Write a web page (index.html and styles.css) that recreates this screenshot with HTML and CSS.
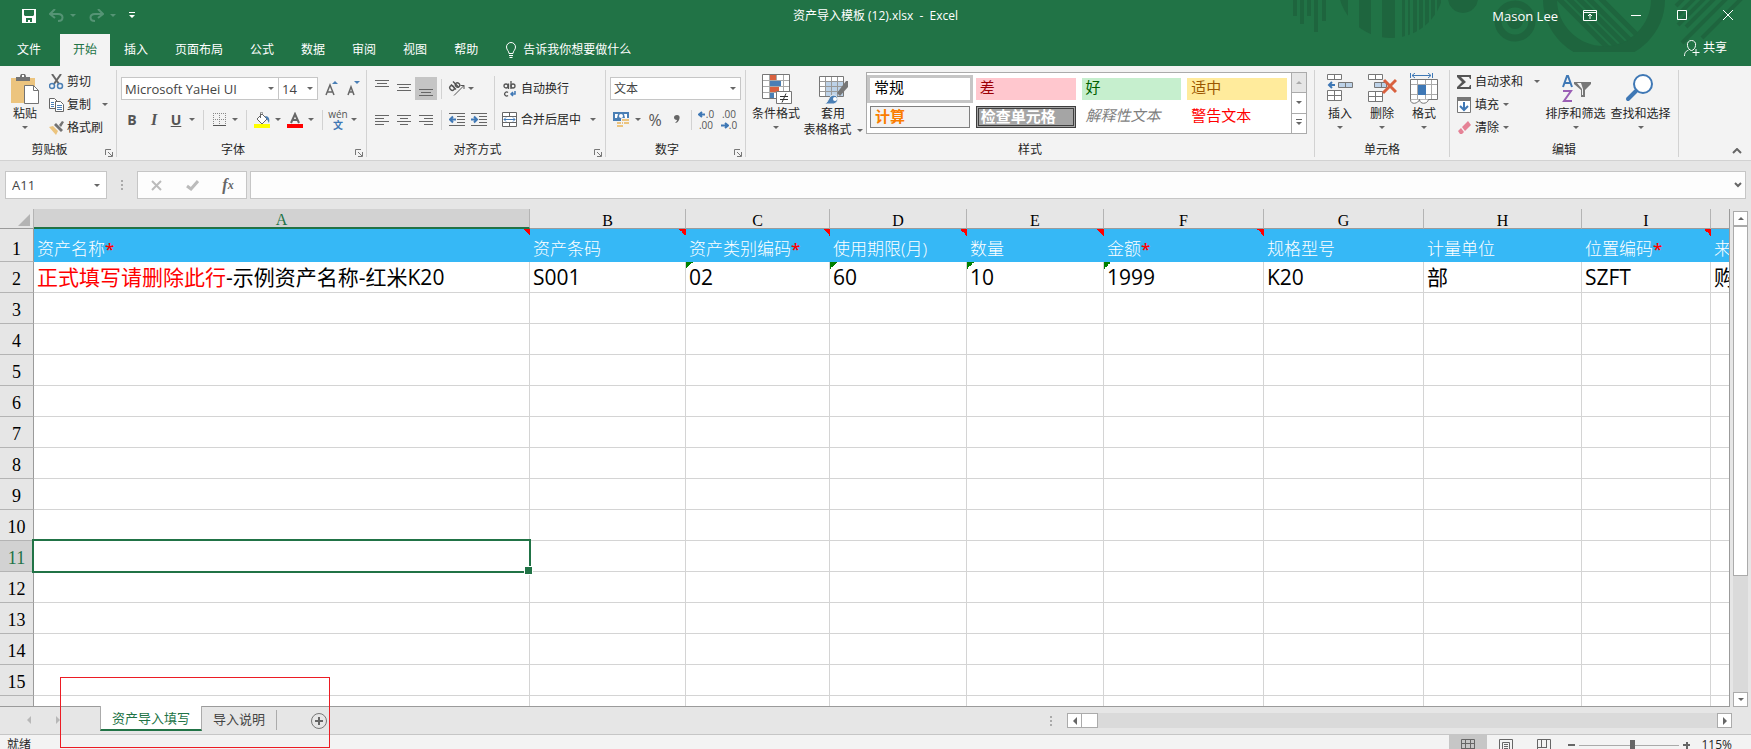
FILE: index.html
```html
<!DOCTYPE html>
<html lang="zh-CN">
<head>
<meta charset="UTF-8">
<meta name="viewport" content="width=device-width, initial-scale=1.0">
<title>资产导入模板 (12).xlsx - Excel</title>
<link rel="stylesheet" href="styles.css">
</head>
<body>
<header class="top">
    <svg class="deco" width="501" height="66" viewBox="0 0 501 66" aria-hidden="true">
        <defs>
            <clipPath id="disc"><circle cx="141" cy="-15" r="53"/></clipPath>
            <clipPath id="ringBox"><rect x="280" y="0" width="150" height="52"/></clipPath>
            <clipPath id="ringHole"><circle cx="354" cy="-1" r="48"/></clipPath>
        </defs>
        <path fill="#1e653e" d="M43 0h4v16h-4zM50 0h4v24h-4zM57 0h4v16h-4zM64 0h4v32h-4zM72 0h4v21h-4z"/>
        <path fill="#1e653e" clip-path="url(#disc)" d="M88 0h10v40h-10zM109 0h12v40h-12zM132 0h13v40h-13zM152 0h3v40h-3zM158 0h2v40h-2zM163 0h4v40h-4zM169 0h4v40h-4zM175 0h4v40h-4zM181 0h4v40h-4zM187 0h4v40h-4z"/>
        <circle cx="213" cy="-2" r="15" fill="#1e653e"/>
        <circle cx="265" cy="21" r="17" fill="none" stroke="#1e653e" stroke-width="7"/>
        <circle cx="265" cy="21" r="8" fill="#1e653e"/>
        <g clip-path="url(#ringBox)" stroke="#1e653e" fill="none">
            <circle cx="354" cy="-1" r="54" stroke-width="14"/>
            <path clip-path="url(#ringHole)" stroke-width="5" d="M290 -20l80 80M300 -20l80 80M310 -20l80 80M320 -20l80 80M332 -20l80 80"/>
        </g>
        <path stroke="#1e653e" stroke-width="4" d="M426 6l8-8M428 15l18-18M428 25l28-28M436 27l30-30M432 43l46-46M452 38l42-42"/>
    </svg>
    <div class="titlebar">
        <div class="quick">
            <button class="plain" aria-label="保存"><svg width="14" height="14" viewBox="0 0 14 14"><path fill="#fff" fill-rule="evenodd" d="M0 0h14v14H0zM2 1v5l1 1h8l1-1V1zM4 9v4h2v-2h2v2h2V9z"/></svg></button>
            <button class="plain dim" aria-label="撤消"><svg width="15" height="13" viewBox="0 0 15 13"><path fill="none" stroke="#559475" stroke-width="2" d="M6 0L1 5l5 4M1 5h8c6 0 6 7 0 7"/></svg><span class="caret"></span></button>
            <button class="plain dim" aria-label="恢复"><svg width="15" height="13" viewBox="0 0 15 13"><path fill="none" stroke="#559475" stroke-width="2" d="M9 0l5 5-5 4M14 5H6c-6 0-6 7 0 7"/></svg><span class="caret"></span></button>
            <button class="plain" aria-label="自定义快速访问工具栏"><svg width="6" height="7" viewBox="0 0 6 7"><path fill="#fff" d="M0 0h6v1H0zM0 3h6L3 6z"/></svg></button>
        </div>
        <div class="doc-title">资产导入模板 (12).xlsx&nbsp; -&nbsp; Excel</div>
        <div class="window-tools">
            <span class="user">Mason Lee</span>
            <button class="plain win" aria-label="功能区显示选项"><svg width="14" height="11" viewBox="0 0 14 11"><path fill="none" stroke="#fff" d="M.5 .5h13v10H.5zM.5 2.500h13M7 9V4M5 6l2-2 2 2"/></svg></button>
            <button class="plain win" aria-label="最小化"><svg width="11" height="11" viewBox="0 0 11 11"><path stroke="#fff" d="M0 5.500h10"/></svg></button>
            <button class="plain win" aria-label="最大化"><svg width="11" height="11" viewBox="0 0 11 11"><path fill="none" stroke="#fff" d="M.5 .5h9v9H.5z"/></svg></button>
            <button class="plain win" aria-label="关闭"><svg width="11" height="11" viewBox="0 0 11 11"><path stroke="#fff" d="M0 0l10 10M10 0L0 10"/></svg></button>
        </div>
    </div>
    <nav class="tabs">
        <button class="tab file">文件</button>
        <button class="tab active">开始</button>
        <button class="tab">插入</button>
        <button class="tab">页面布局</button>
        <button class="tab">公式</button>
        <button class="tab">数据</button>
        <button class="tab">审阅</button>
        <button class="tab">视图</button>
        <button class="tab">帮助</button>
        <button class="tab tell"><svg width="12" height="16" viewBox="0 0 12 16"><path fill="none" stroke="#fff" d="M4 11.500C4 9 1.500 8 1.500 5a4.500 4.500 0 0 1 9 0C10.500 8 8 9 8 11.500zM4 13.500h4M4.500 15.500h3"/></svg>告诉我你想要做什么</button>
        <button class="tab share"><svg width="16" height="17" viewBox="0 0 16 17"><path fill="none" stroke="#fff" d="M.5 16c0-4 2-5 4-6M7.500 .5a4 4 0 0 1 4 5c0 2-2 5-4 5s-4-3-4-5a4 4 0 0 1 4-5zM12 9v7M8.500 12.500h7"/></svg>共享</button>
    </nav>
</header>

<section class="ribbon">
    <div class="group g-clipboard">
        <div class="body">
            <button class="big paste">
                <svg width="30" height="32" viewBox="0 0 30 32"><path fill="#ecc47e" d="M1 5h24v25H1z"/><path fill="#737373" d="M6 4h4V3l1-2h4l1 2v1h4v4H6z"/><path fill="#fff" d="M12 2h2v2h-2z"/><path fill="#fff" stroke="#737373" d="M14.500 12.500h9l5 5v13h-14z"/><path fill="none" stroke="#737373" d="M23.500 12.500v5h5"/></svg>
                粘贴<span class="caret"></span>
            </button>
            <div class="stack">
                <button class="small"><svg width="15" height="16" viewBox="0 0 15 16"><path stroke="#666" stroke-width="2" d="M3 0l7 10M12 0L5 10"/><circle cx="3" cy="12" r="2.500" fill="none" stroke="#4a7fb5" stroke-width="1.500"/><circle cx="11" cy="12" r="2.500" fill="none" stroke="#4a7fb5" stroke-width="1.500"/></svg>剪切</button>
                <button class="small"><svg width="15" height="14" viewBox="0 0 15 14"><path fill="#fff" stroke="#666" d="M.5 .5h5l3 3v7h-8z"/><path stroke="#4a7fb5" d="M2 4.500h3M2 6.500h3M2 8.500h3"/><path fill="#fff" stroke="#666" d="M6.500 3.500h5l3 3v7h-8z"/><path stroke="#4a7fb5" d="M8 7.500h5M8 9.500h5M8 11.500h5"/></svg>复制<span class="caret far"></span></button>
                <button class="small"><svg width="15" height="14" viewBox="0 0 15 14"><path fill="#ecc47e" d="M0 6l4-1 5 5-2 4z"/><path fill="#737373" d="M5 4l2-2 7 7-2 2zM10 4l3-4 2 1-3 5z"/></svg>格式刷</button>
            </div>
        </div>
        <div class="label">剪贴板<svg class="launcher" width="8" height="8" viewBox="0 0 8 8"><path fill="none" stroke="#777" d="M.5 6V.5H6M3 3l4 4M7.500 3v4.500H3"/></svg></div>
    </div>

    <div class="group g-font">
        <div class="body rows">
            <div class="row">
                <select class="combo font-name" aria-label="字体"><option>Microsoft YaHei UI</option></select>
                <select class="combo font-size" aria-label="字号"><option>14</option></select>
                <button class="ic grow" aria-label="增大字号"><svg width="13" height="15" viewBox="0 0 13 15"><path fill="none" stroke="#666" stroke-width="1.500" d="M1 14L5 4l4 10M2 11h6"/><path fill="#4a7fb5" d="M7 3h6l-3-3z"/></svg></button>
                <button class="ic" aria-label="减小字号"><svg width="13" height="15" viewBox="0 0 13 15"><path fill="none" stroke="#666" stroke-width="1.500" d="M1 14l3-8 3 8M2 11h4"/><path fill="#4a7fb5" d="M7 0h6l-3 3z"/></svg></button>
            </div>
            <div class="row">
                <button class="ic letter"><b>B</b></button>
                <button class="ic letter"><i>I</i></button>
                <button class="ic letter"><u>U</u></button>
                <span class="caret"></span>
                <span class="vline"></span>
                <button class="ic" aria-label="边框"><svg width="13" height="13" viewBox="0 0 13 13"><path stroke="#888" stroke-dasharray="1 1" fill="none" d="M.5 0v12M6.500 0v12M12.500 0v12M0 .5h13M0 6.500h13"/><path stroke="#555" d="M0 12.500h13"/></svg></button>
                <span class="caret"></span>
                <span class="vline"></span>
                <button class="ic" aria-label="填充颜色"><svg width="16" height="16" viewBox="0 0 16 16"><path fill="#fff" stroke="#666" d="M3 7l5-5 5 5-5 5z"/><path fill="none" stroke="#666" d="M6.500 6V1.500c0-2 2-2 2 0"/><path fill="#4a7fb5" d="M11 4c4 0 5 3 4 7-1-1-1-3-3-5z"/><path fill="#ff0" d="M0 12h16v4H0z"/></svg></button>
                <span class="caret"></span>
                <button class="ic" aria-label="字体颜色"><svg width="16" height="16" viewBox="0 0 16 16"><path fill="none" stroke="#666" stroke-width="2" d="M4 11l4-9 4 9M5 8h6"/><path fill="red" d="M0 12h16v4H0z"/></svg></button>
                <span class="caret"></span>
                <span class="vline"></span>
                <button class="ic pinyin"><span>wén</span><span>文</span></button>
                <span class="caret"></span>
            </div>
        </div>
        <div class="label">字体<svg class="launcher" width="8" height="8" viewBox="0 0 8 8"><path fill="none" stroke="#777" d="M.5 6V.5H6M3 3l4 4M7.500 3v4.500H3"/></svg></div>
    </div>

    <div class="group g-align">
        <div class="body">
            <div class="rows">
                <div class="row">
                    <button class="ic" aria-label="顶端对齐"><svg width="14" height="20" viewBox="0 0 14 20"><path stroke="#666" d="M0 1.500h14M2 4.500h10M0 7.500h14"/></svg></button>
                    <button class="ic" aria-label="垂直居中"><svg width="14" height="20" viewBox="0 0 14 20"><path stroke="#666" d="M0 5.500h14M2 8.500h10M0 11.500h14"/></svg></button>
                    <button class="ic on" aria-label="底端对齐"><svg width="14" height="20" viewBox="0 0 14 20"><path stroke="#666" d="M0 10.500h14M2 13.500h10M0 16.500h14"/></svg></button>
                    <span class="vline"></span>
                    <button class="ic" aria-label="方向"><svg width="18" height="16" viewBox="0 0 18 16"><g fill="none" stroke="#555" stroke-width="1.400"><ellipse cx="4" cy="7" rx="2" ry="2.500" transform="rotate(-45 4 7)"/><path d="M3 3.500l5 5M5 .5l6 6"/><ellipse cx="9.500" cy="4" rx="2" ry="2.300" transform="rotate(-45 9.500 4)"/></g><path stroke="#555" fill="none" d="M6 14.500l10-10M12.500 4.500h3.500v3.500"/></svg></button>
                    <span class="caret"></span>
                </div>
                <div class="row">
                    <button class="ic" aria-label="左对齐"><svg width="14" height="12" viewBox="0 0 14 12"><path stroke="#666" d="M0 1.500h14M0 4.500h9M0 7.500h14M0 10.500h9"/></svg></button>
                    <button class="ic" aria-label="居中"><svg width="14" height="12" viewBox="0 0 14 12"><path stroke="#666" d="M0 1.500h14M3 4.500h8M0 7.500h14M3 10.500h8"/></svg></button>
                    <button class="ic" aria-label="右对齐"><svg width="14" height="12" viewBox="0 0 14 12"><path stroke="#666" d="M0 1.500h14M5 4.500h9M0 7.500h14M5 10.500h9"/></svg></button>
                    <span class="vline"></span>
                    <button class="ic" aria-label="减少缩进量"><svg width="16" height="13" viewBox="0 0 16 13"><path stroke="#666" d="M0 .5h16M8 3.500h8M8 6.500h8M8 9.500h8M0 12.500h16"/><path stroke="#3f78b5" stroke-width="2" fill="none" d="M1 6.500h6M4 3.500l-3 3 3 3"/></svg></button>
                    <button class="ic" aria-label="增加缩进量"><svg width="16" height="13" viewBox="0 0 16 13"><path stroke="#666" d="M0 .5h16M8 3.500h8M8 6.500h8M8 9.500h8M0 12.500h16"/><path stroke="#3f78b5" stroke-width="2" fill="none" d="M0 6.500h6M3 3.500l3 3-3 3"/></svg></button>
                </div>
            </div>
            <span class="vline tall"></span>
            <div class="rows wrap-col">
                <button class="small"><svg width="16" height="16" viewBox="0 0 16 16"><g fill="none" stroke="#555" stroke-width="1.300"><circle cx="4" cy="5" r="2"/><path d="M6.500 2.500V8M9 0v8M6 11.500a2 2 0 1 0 0 3"/><circle cx="11" cy="5" r="2"/></g><path fill="none" stroke="#3f78b5" stroke-width="1.500" d="M13 10v3H9M11 11l-2 2 2 2"/></svg>自动换行</button>
                <button class="small"><svg width="16" height="16" viewBox="0 0 16 16"><path fill="#fff" stroke="#666" d="M.5 .5h14v14H.5zM.5 4.500h14M.5 10.500h14M7.500 .5v4M7.500 10.500v4"/><path fill="none" stroke="#3f78b5" d="M2 7.500h11M4 5.500l-2 2 2 2M11 5.500l2 2-2 2"/></svg>合并后居中<span class="caret"></span></button>
            </div>
        </div>
        <div class="label">对齐方式<svg class="launcher" width="8" height="8" viewBox="0 0 8 8"><path fill="none" stroke="#777" d="M.5 6V.5H6M3 3l4 4M7.500 3v4.500H3"/></svg></div>
    </div>

    <div class="group g-number">
        <div class="body rows">
            <div class="row">
                <select class="combo number-format" aria-label="数字格式"><option>文本</option></select>
            </div>
            <div class="row">
                <button class="ic" aria-label="会计数字格式"><svg width="17" height="16" viewBox="0 0 17 16"><path fill="#4a7fb5" d="M0 0h16v9H0z"/><path fill="#fff" d="M2 2h3l-1 4H2zM11 2h3v4h-2z"/><circle cx="8" cy="4" r="2" fill="#fff"/><path fill="#ecc47e" stroke="#f3f3f3" d="M8.500 6.500h8v3h-8zM8.500 9.500h8v3h-8zM3.500 9.500h7v3h-7zM3.500 12.500h7v3h-7z"/></svg></button>
                <span class="caret"></span>
                <button class="ic letter percent">%</button>
                <button class="ic" aria-label="千位分隔样式"><svg width="6" height="9" viewBox="0 0 6 9"><path fill="#666" d="M3 0c3 0 3 3 2 5-1 2-2 3-4 3 1-1 2-2 2-3-4 0-4-5 0-5z"/></svg></button>
                <span class="vline"></span>
                <button class="ic decimal"><span><svg width="8" height="7" viewBox="0 0 8 7"><path fill="none" stroke="#3f78b5" stroke-width="2" d="M1 3.500h6M4 1L1 3.500 4 6"/></svg>.0</span><span>.00</span></button>
                <button class="ic decimal"><span>.00</span><span><svg width="8" height="7" viewBox="0 0 8 7"><path fill="none" stroke="#3f78b5" stroke-width="2" d="M0 3.500h6M4 1l3 2.500L4 6"/></svg>.0</span></button>
            </div>
        </div>
        <div class="label">数字<svg class="launcher" width="8" height="8" viewBox="0 0 8 8"><path fill="none" stroke="#777" d="M.5 6V.5H6M3 3l4 4M7.500 3v4.500H3"/></svg></div>
    </div>

    <div class="group g-styles">
        <div class="body">
            <button class="big">
                <svg width="32" height="32" viewBox="0 0 32 32"><path fill="#fff" stroke="#777" d="M2.500 1.500h27v24h-27z"/><path stroke="#aaa" d="M9.500 2v23M16.500 2v23M23.500 2v23M3 7.500h26M3 13.500h26M3 19.500h26"/><path fill="#d9613f" d="M10 2h6v5h-6zM10 14h9v5h-9z"/><path fill="#4a7fb5" d="M10 8h11v5H10zM10 20h4v5h-4z"/><path fill="#fff" stroke="#777" d="M16.500 18.500h15v12h-15z"/><path stroke="#333" d="M20 23.500h8M20 26.500h8M26 20.500l-4 9"/></svg>
                条件格式<span class="caret"></span>
            </button>
            <button class="big table-style">
                <svg width="32" height="32" viewBox="0 0 32 32"><path fill="#fff" stroke="#777" d="M2.500 3.500h24v20h-24z"/><path fill="#bdd2e8" d="M9 9h17v14H9z"/><path stroke="#999" d="M8.500 4v19M14.500 4v19M20.500 4v19M3 8.500h23M3 13.500h23M3 18.500h23"/><path fill="#777" d="M20 20l9-12h2v6l-8 9z"/><path fill="#4a7fb5" stroke="#f3f3f3" d="M7 31c5-1 4-9 10-9 5 1 5 7 0 9z"/><circle cx="18" cy="26" r="2" fill="#fff"/></svg>
                套用<span class="line">表格格式<span class="caret"></span></span>
            </button>
            <div class="gallery">
                <div class="swatches">
                    <button class="style normal">常规</button>
                    <button class="style bad">差</button>
                    <button class="style good">好</button>
                    <button class="style neutral">适中</button>
                    <button class="style calc">计算</button>
                    <button class="style check">检查单元格</button>
                    <button class="style explain">解释性文本</button>
                    <button class="style warn">警告文本</button>
                </div>
                <div class="gallery-nav">
                    <button class="off" aria-label="上一行"><span class="caret up"></span></button>
                    <button aria-label="下一行"><span class="caret"></span></button>
                    <button aria-label="其他"><span class="caret lined"></span></button>
                </div>
            </div>
        </div>
        <div class="label">样式</div>
    </div>

    <div class="group g-cells">
        <div class="body">
            <button class="big">
                <svg width="30" height="32" viewBox="0 0 30 32"><path fill="#fff" stroke="#777" d="M2.500 1.500h14v5h-14zM9.500 1.500v5M2.500 17.500h14v10h-14zM9.500 17.500v10M2.500 22.500h14"/><path fill="#bdd2e8" stroke="#777" d="M13.500 9.500h14v5h-14zM20.500 9.500v5"/><path fill="none" stroke="#3f78b5" stroke-width="2" d="M4 12h6M7 9l-3 3 3 3"/></svg>
                插入<span class="caret"></span>
            </button>
            <button class="big">
                <svg width="30" height="32" viewBox="0 0 30 32"><path fill="#fff" stroke="#777" d="M1.500 1.500h14v5h-14zM8.500 1.500v5M1.500 18.500h14v10h-14zM8.500 18.500v10M1.500 23.500h14"/><path fill="#bdd2e8" stroke="#777" d="M7.500 9.500h12v5h-12zM14.500 9.500v5"/><path stroke="#d9613f" stroke-width="3" d="M17 7l12 12M29 7L16 20"/></svg>
                删除<span class="caret"></span>
            </button>
            <button class="big">
                <svg width="30" height="32" viewBox="0 0 30 32"><path fill="none" stroke="#3f78b5" d="M1.500 0v5M23.500 0v5M3 2.500h19M6 0L3 2.500 6 5M19 0l3 2.500L19 5"/><path fill="#fff" stroke="#777" d="M1.500 6.500h27v20h-27z"/><path stroke="#aaa" d="M8.500 7v19M16.500 7v19M22.500 7v19M2 11.500h26M2 21.500h26"/><path fill="#3f78b5" d="M9 12h8v10H9z"/><path fill="#fff" stroke="#777" d="M1.500 26.500c0 6 8 4 9 0 0 5 8 5 9 0"/></svg>
                格式<span class="caret"></span>
            </button>
        </div>
        <div class="label">单元格</div>
    </div>

    <div class="group g-edit">
        <div class="body">
            <div class="stack">
                <button class="small"><svg width="16" height="16" viewBox="0 0 16 16"><path fill="#555" d="M1 1h14v4h-1l-1-2H5l5 5-6 5h9l1-2h1v4H1v-2l5-5-5-5z"/></svg>自动求和<span class="caret far"></span></button>
                <button class="small"><svg width="16" height="16" viewBox="0 0 16 16"><path fill="#fff" stroke="#777" d="M1.500 1.500h13v14h-13z"/><path fill="#777" d="M1 0h14v4H1z"/><path fill="none" stroke="#3f78b5" stroke-width="2" d="M8 5v8M4 9l4 4 4-4"/></svg>填充<span class="caret"></span></button>
                <button class="small"><svg width="16" height="16" viewBox="0 0 16 16"><path fill="#e58296" d="M6 7l6-6 3 4-6 6zM5 8l3 4-2 2H4l-2-3z"/></svg>清除<span class="caret"></span></button>
            </div>
            <button class="big sort">
                <svg width="32" height="32" viewBox="0 0 32 32"><path fill="none" stroke="#3f78b5" stroke-width="2" d="M3 14L7 3h1l4 11M4 10h7"/><path fill="none" stroke="#9a5fb5" stroke-width="2" d="M3 18h8L4 28h8"/><path fill="#777" d="M14 9h17v2l-6 6v7h-4v-7l-7-6z"/><path fill="#f3f3f3" d="M17 10h4l2 6v6h-1v-6z"/></svg>
                排序和筛选<span class="caret"></span>
            </button>
            <button class="big">
                <svg width="32" height="32" viewBox="0 0 32 32"><circle cx="18" cy="11" r="9" fill="#fff" stroke="#3f78b5" stroke-width="2"/><path stroke="#3f78b5" stroke-width="4" stroke-linecap="round" d="M11 18l-8 8"/></svg>
                查找和选择<span class="caret"></span>
            </button>
        </div>
        <div class="label">编辑</div>
    </div>
    <button class="plain collapse" aria-label="折叠功能区"><svg width="10" height="6" viewBox="0 0 10 6"><path fill="none" stroke="#666" stroke-width="2" d="M1 5l4-4 4 4"/></svg></button>
</section>

<section class="formula">
    <select class="namebox" aria-label="名称框"><option>A11</option></select>
    <span class="dots"></span>
    <div class="fx-tools">
        <button class="plain" aria-label="取消"><svg width="11" height="11" viewBox="0 0 11 11"><path stroke="#bbb" stroke-width="2" d="M1 1l9 9M10 1l-9 9"/></svg></button>
        <button class="plain" aria-label="输入"><svg width="13" height="11" viewBox="0 0 13 11"><path fill="none" stroke="#bbb" stroke-width="3" d="M1 6l4 3 7-8"/></svg></button>
        <button class="plain fx" aria-label="插入函数">f<small>x</small></button>
    </div>
    <div class="fx-field">
        <input class="fx-input" type="text" aria-label="编辑栏">
        <button class="plain" aria-label="展开编辑栏"><svg width="8" height="6" viewBox="0 0 8 6"><path fill="none" stroke="#666" stroke-width="2" d="M1 1l3 3 3-3"/></svg></button>
    </div>
</section>

<main class="workarea">
    <div class="sheet">
        <table class="grid">
            <colgroup>
                <col class="c-head"><col class="c-a"><col class="c-b"><col class="c-c"><col class="c-d"><col class="c-d">
                <col class="c-f"><col class="c-f"><col class="c-h"><col class="c-i"><col>
            </colgroup>
            <thead>
                <tr>
                    <th class="corner"><svg width="12" height="12" viewBox="0 0 12 12"><path fill="#b4b4b4" d="M12 0v12H0z"/></svg></th>
                    <th class="current">A</th><th>B</th><th>C</th><th>D</th><th>E</th><th>F</th><th>G</th><th>H</th><th>I</th><th></th>
                </tr>
            </thead>
            <tbody id="rows">
                <tr class="titles">
                    <th>1</th>
                    <td class="note">资产名称<span class="red">*</span></td>
                    <td class="note">资产条码</td>
                    <td class="note">资产类别编码<span class="red">*</span></td>
                    <td class="note">使用期限(月)</td>
                    <td class="note">数量</td>
                    <td class="note">金额<span class="red">*</span></td>
                    <td>规格型号</td>
                    <td>计量单位</td>
                    <td class="note">位置编码<span class="red">*</span></td>
                    <td>来</td>
                </tr>
                <tr class="sample">
                    <th>2</th>
                    <td><span class="red">正式填写请删除此行</span>-示例资产名称-红米K20</td>
                    <td>S001</td>
                    <td class="astext">02</td>
                    <td class="astext">60</td>
                    <td class="astext">10</td>
                    <td class="astext">1999</td>
                    <td>K20</td>
                    <td>部</td>
                    <td>SZFT</td>
                    <td>购</td>
                </tr>
            </tbody>
        </table>
    </div>
    <div class="vscroll">
        <button aria-label="向上滚动"><span class="caret up"></span></button>
        <div class="vtrack"><div class="vthumb"></div></div>
        <button aria-label="向下滚动"><span class="caret"></span></button>
    </div>
</main>

<footer class="bottom">
    <div class="sheetbar">
        <div class="sheet-nav">
            <span class="caret left"></span>
            <span class="caret right"></span>
        </div>
        <button class="sheet-tab active">资产导入填写</button>
        <button class="sheet-tab">导入说明</button>
        <button class="plain add" aria-label="新工作表"><svg width="18" height="18" viewBox="0 0 18 18"><circle cx="9" cy="9" r="7.500" fill="none" stroke="#777"/><path stroke="#666" stroke-width="2" d="M5 9h8M9 5v8"/></svg></button>
        <div class="hscroll">
            <span class="dots"></span>
            <button aria-label="向左滚动"><span class="caret left"></span></button>
            <div class="htrack"><div class="hthumb"></div></div>
            <button aria-label="向右滚动"><span class="caret right"></span></button>
        </div>
    </div>
    <div class="status">
        <span>就绪</span>
        <div class="views">
            <button class="on" aria-label="普通"><svg width="14" height="14" viewBox="0 0 14 14"><path fill="none" stroke="#666" d="M.5 .5h13v13H.5zM4.500 0v14M9.500 0v14M0 4.500h14M0 9.500h14"/></svg></button>
            <button aria-label="页面布局"><svg width="14" height="14" viewBox="0 0 14 14"><path fill="none" stroke="#666" d="M.5 .5h13v13H.5zM3.500 3.500h7v10M3.500 3.500v10M5 5.500h4M5 7.500h4M5 9.500h4"/></svg></button>
            <button aria-label="分页预览"><svg width="14" height="14" viewBox="0 0 14 14"><path fill="none" stroke="#666" d="M.5 .5h13v13H.5zM4.500 0v8M9.500 0v8M0 8.500h10"/></svg></button>
        </div>
        <button class="plain zoom-out" aria-label="缩小"></button>
        <input class="zoom" type="range" min="0" max="200" value="106" aria-label="显示比例">
        <button class="plain zoom-in" aria-label="放大"></button>
        <span class="percent-value">115%</span>
    </div>
    <div class="marker"></div>
</footer>

<script>
    var body = document.getElementById("rows");
    var selectedRow = 11;

    // empty rows under the sample line, the last one is only a sliver
    for (var r = 3; r <= 16; r++) {
        var tr = document.createElement("tr");
        var head = document.createElement("th");
        head.textContent = r < 16 ? r : "";
        tr.appendChild(head);
        for (var c = 0; c < 10; c++) {
            tr.appendChild(document.createElement("td"));
        }
        if (r === selectedRow) {
            head.className = "current";
            tr.cells[1].className = "selected";
        }
        body.appendChild(tr);
    }
</script>
</body>
</html>
```

FILE: styles.css
```css
* {
    box-sizing: border-box;
}

body {
    margin: 0;
    height: 100vh;
    display: flex;
    flex-direction: column;
    overflow: hidden;
    background-color: #e6e6e6;
    color: #262626;
    font-family: "Open Sans", "Noto Sans CJK SC", sans-serif;
    font-size: 12px;
    line-height: 16px;
}

button, input, select {
    font: inherit;
    color: inherit;
}

button {
    padding: 0;
    border: none;
    background: none;
    white-space: nowrap;
}

svg {
    flex: none;
}

.plain {
    display: flex;
    align-items: center;
    justify-content: center;
}

.red {
    color: #ff0000;
}

/* small triangles */
.caret {
    flex: none;
    width: 0;
    height: 0;
    border: 3px solid transparent;
    border-top-color: #666;
    border-bottom: none;
}

.caret.up {
    border: 3px solid transparent;
    border-bottom-color: #666;
    border-top: none;
}

.caret.left {
    border: 4px solid transparent;
    border-right-color: #666;
    border-left: none;
}

.caret.right {
    border: 4px solid transparent;
    border-left-color: #666;
    border-right: none;
}

/* title bar */
.top {
    position: relative;
    flex: none;
    background-color: #217346;
    color: #fff;
}

.deco {
    position: absolute;
    top: 0;
    right: 0;
}

.titlebar {
    position: relative;
    display: grid;
    grid-template-columns: 1fr auto 1fr;
    align-items: center;
    height: 34px;
    padding-bottom: 3px;
}

.quick {
    display: flex;
    align-items: center;
    gap: 13px;
    padding-left: 22px;
}

.quick .dim {
    gap: 6px;
}

.quick .dim .caret {
    border-top-color: #559475;
}

.window-tools {
    display: flex;
    justify-content: flex-end;
    align-items: center;
}

.user {
    font-size: 13px;
    margin-right: 9px;
}

.win {
    width: 46px;
    height: 30px;
}

.tabs {
    position: relative;
    display: flex;
    gap: 1px;
    height: 32px;
}

.tab {
    padding: 0 13px;
}

.tab.file {
    padding: 0 18px 0 17px;
}

.tab.active {
    background-color: #f3f3f3;
    color: #217346;
}

.tab.tell, .tab.share {
    display: flex;
    align-items: center;
    gap: 6px;
}

.tab.share {
    margin-left: auto;
    padding: 0 24px 4px 0;
    gap: 3px;
}

/* ribbon */
.ribbon {
    flex: none;
    display: flex;
    padding-top: 4px;
    background-color: #f3f3f3;
    border-bottom: 1px solid #d2d2d2;
}

.group {
    flex: none;
    height: 87px;
    margin-bottom: 3px;
    display: flex;
    flex-direction: column;
    border-right: 1px solid #d2d2d2;
}

.g-clipboard { width: 117px; }
.g-font { width: 250px; }
.g-align { width: 239px; }
.g-number { width: 140px; }
.g-styles { width: 569px; }
.g-cells { width: 135px; }
.g-edit { width: 229px; }

.body {
    flex: 1;
    display: flex;
}

.label {
    position: relative;
    height: 18px;
    line-height: 22px;
    text-align: center;
}

.label:has(.launcher) {
    padding-right: 17px;
}

.launcher {
    position: absolute;
    right: 3px;
    bottom: 0;
}

.big {
    display: flex;
    flex-direction: column;
    align-items: center;
    padding-top: 3px;
}

.big svg {
    margin-bottom: 1px;
}

.big > .caret {
    margin-top: 4px;
}

.big .line {
    display: flex;
    align-items: center;
    gap: 5px;
}

.stack {
    display: flex;
    flex-direction: column;
}

.small {
    display: flex;
    align-items: center;
    gap: 3px;
    height: 23px;
}

.small .caret {
    margin-left: 1px;
}

.small .caret.far {
    margin-left: 8px;
}

.rows {
    display: flex;
    flex-direction: column;
    gap: 8px;
    padding-top: 7px;
}

.row {
    display: flex;
    align-items: center;
    height: 23px;
}

.ic {
    display: flex;
    align-items: center;
    justify-content: center;
    width: 22px;
    height: 23px;
}

.ic.on {
    background-color: #c5c5c5;
}

.letter {
    font-size: 14px;
    color: #555;
}

.letter i {
    font-family: "Liberation Serif", serif;
    font-size: 16px;
    font-weight: bold;
}

.letter u {
    font-weight: bold;
}

.vline {
    flex: none;
    width: 1px;
    height: 20px;
    margin: 0 4px;
    background-color: #d2d2d2;
}

.vline.tall {
    height: 54px;
    margin: 6px 0 0 4px;
}

.combo, .namebox {
    appearance: none;
    height: 23px;
    padding: 0 4px 0 3px;
    border: 1px solid #c6c6c6;
    border-radius: 0;
    background: #fff url("data:image/svg+xml,%3Csvg xmlns='http://www.w3.org/2000/svg' width='6' height='3'%3E%3Cpath fill='%23666' d='M0 0h6L3 3z'/%3E%3C/svg%3E") no-repeat right 4px center;
    color: #444;
}

.g-clipboard .body {
    padding-left: 9px;
}

.paste {
    width: 32px;
    margin-right: 8px;
}

.g-font .body {
    padding-left: 4px;
}

.font-name, .font-size {
    font-size: 13px;
}

.font-name {
    width: 158px;
}

.font-size {
    width: 40px;
    margin-left: -1px;
}

.ic.grow {
    margin-left: 2px;
}

.g-font .row .caret {
    margin: 0 3px 0 2px;
}

.g-font .row .vline {
    margin: 0 4px 0 5px;
}

.pinyin, .decimal {
    flex-direction: column;
    font-size: 10px;
    line-height: 11px;
    color: #555;
}

.pinyin span:last-child {
    color: #3f78b5;
    font-weight: bold;
}

.decimal span {
    display: flex;
    align-items: center;
}

.g-align .body, .g-number .body {
    padding-left: 4px;
}

.wrap-col {
    padding-left: 7px;
}

.wrap-col .caret {
    margin-left: 6px;
}

.number-format {
    width: 131px;
}

.g-number .caret {
    margin-left: 3px;
}

.g-number .vline {
    margin: 0 3px;
}

.percent {
    font-size: 16px;
    margin-left: 3px;
}

.decimal {
    margin-right: 1px;
}

.g-styles .body {
    padding-left: 6px;
}

.table-style {
    width: 66px;
}

.gallery {
    display: flex;
    flex: 1;
    height: 62px;
    margin: 2px 7px 0 0;
    border: 1px solid #ababab;
    background-color: #fff;
}

.swatches {
    flex: 1;
    display: grid;
    grid-template-columns: repeat(4, 1fr);
    grid-auto-rows: 22px;
    gap: 6px;
    padding: 5px 4px 5px 3px;
}

.style {
    overflow: hidden;
    padding: 0 0 4px 4px;
    font-size: 15px;
    line-height: 18px;
    text-align: left;
    color: #000;
}

.normal { outline: 3px solid #c5c5c5; }
.bad { background-color: #ffc7ce; color: #9c0006; }
.good { background-color: #c6efce; color: #006100; }
.neutral { background-color: #ffeb9c; color: #9c5700; }
.calc { border: 1px solid #7f7f7f; background-color: #f2f2f2; color: #fa7d00; font-weight: bold; }
.check { border: 3px double #3f3f3f; background-color: #a5a5a5; color: #fff; font-weight: bold; padding-left: 2px; line-height: 14px; }
.explain { color: #7f7f7f; font-style: italic; }
.warn { color: #ff0000; }

.gallery-nav {
    display: flex;
    flex-direction: column;
    width: 15px;
    border-left: 1px solid #ababab;
}

.gallery-nav button {
    flex: 1;
    display: flex;
    align-items: center;
    justify-content: center;
}

.gallery-nav button + button {
    border-top: 1px solid #ababab;
}

.gallery-nav .off {
    background-color: #e6e6e6;
}

.gallery-nav .off .caret {
    border-bottom-color: #aaa;
}

.lined {
    position: relative;
}

.lined::before {
    content: "";
    position: absolute;
    left: -3px;
    top: -6px;
    width: 6px;
    height: 1px;
    background-color: #666;
}

.g-cells .body {
    padding-left: 4px;
}

.g-cells .big {
    width: 42px;
}

.g-edit .body {
    padding-left: 6px;
}

.g-edit .stack {
    width: 87px;
}

.g-edit .big {
    width: 65px;
}

.collapse {
    margin: auto 9px 6px auto;
}

/* formula bar */
.formula {
    flex: none;
    display: flex;
    align-items: center;
    padding: 10px 5px;
}

.namebox {
    width: 102px;
    height: 28px;
    padding-left: 6px;
    font-size: 13px;
    background-position: right 6px center;
}

.dots {
    width: 2px;
    height: 10px;
    background: repeating-linear-gradient(#aaa 0 2px, transparent 2px 4px);
}

.formula .dots {
    margin: 0 14px;
}

.fx-tools {
    display: flex;
    width: 110px;
    height: 28px;
    border: 1px solid #c6c6c6;
    background-color: #fdfdfd;
}

.fx-tools button {
    flex: 1;
}

.fx {
    color: #666;
    font: italic bold 16px "Liberation Serif", serif;
}

.fx small {
    font-size: 12px;
}

.fx-field {
    flex: 1;
    display: flex;
    height: 28px;
    margin-left: 3px;
    padding-right: 3px;
    border: 1px solid #c6c6c6;
    background-color: #fdfdfd;
}

.fx-input {
    flex: 1;
    border: none;
    background: none;
    outline: none;
}

/* sheet */
.workarea {
    flex: 1;
    min-height: 0;
    display: flex;
}

.sheet {
    flex: 1;
    min-width: 0;
    overflow: hidden;
    border-right: 1px solid #9b9b9b;
    border-bottom: 1px solid #9b9b9b;
}

.grid {
    width: 100%;
    table-layout: fixed;
    border-collapse: separate;
    border-spacing: 0;
}

.c-head { width: 34px; }
.c-a { width: 496px; }
.c-b { width: 156px; }
.c-c { width: 144px; }
.c-d { width: 137px; }
.c-f { width: 160px; }
.c-h { width: 158px; }
.c-i { width: 129px; }

.grid th {
    padding: 0;
    font-family: "Liberation Serif", serif;
    font-size: 18px;
    font-weight: normal;
    line-height: 18px;
    color: #000;
    background-color: #e6e6e6;
}

.grid thead th {
    height: 20px;
    font-size: 16px;
    line-height: 14px;
    vertical-align: bottom;
    border-right: 1px solid #b4b4b4;
    border-bottom: 1px solid #9b9b9b;
}

.grid thead th.current {
    border-bottom: 2px solid #217346;
}

.grid thead .corner {
    text-align: right;
    padding-right: 3px;
}

.grid tbody th {
    height: 31px;
    padding-top: 4px;
    border-right: 1px solid #9b9b9b;
    border-bottom: 1px solid #b4b4b4;
}

.grid th.current {
    background-color: #d2d2d2;
    color: #217346;
}

.grid td {
    padding: 0 3px;
    overflow: hidden;
    white-space: nowrap;
    background-color: #fff;
    border-right: 1px solid #d4d4d4;
    border-bottom: 1px solid #d4d4d4;
    background-repeat: no-repeat;
}

.grid tr > :last-child {
    border-right: none;
    padding-right: 0;
}

.grid .titles th {
    height: 33px;
    padding-top: 8px;
}

.grid .titles td {
    border: none;
    background-color: #36b8f6;
    color: #fff;
    font-size: 17px;
    font-weight: 300;
    line-height: 26px;
    vertical-align: bottom;
}

.titles .red {
    font-weight: 600;
}

.titles .note {
    background-image: linear-gradient(to top right, transparent 50%, #ff0000 50%);
    background-position: right top;
    background-size: 7px 7px;
}

.sample td {
    color: #000;
    font-size: 21px;
    line-height: 30px;
}

.astext {
    background-image: linear-gradient(to bottom right, #008000 50%, transparent 50%);
    background-size: 7px 7px;
}

.grid .selected {
    position: relative;
    overflow: visible;
}

.selected::before {
    content: "";
    position: absolute;
    inset: -2px;
    border: 2px solid #217346;
}

.selected::after {
    content: "";
    position: absolute;
    right: -4px;
    bottom: -4px;
    width: 7px;
    height: 7px;
    border: 1px solid #fff;
    background-color: #217346;
}

/* scroll bars */
.vscroll {
    flex: none;
    display: flex;
    flex-direction: column;
    width: 15px;
    margin: 2px 3px 0;
}

.vscroll button, .hscroll button {
    flex: none;
    display: flex;
    align-items: center;
    justify-content: center;
    width: 15px;
    height: 15px;
    border: 1px solid #ababab;
    background-color: #fff;
}

.vtrack {
    flex: 1;
    background-color: #dadada;
}

.vthumb {
    height: 75%;
    border: 1px solid #ababab;
    background-color: #fff;
}

/* sheet tabs and status bar */
.bottom {
    position: relative;
    flex: none;
}

.sheetbar {
    display: flex;
    align-items: flex-start;
    height: 27px;
}

.sheet-nav {
    display: flex;
    align-items: center;
    gap: 25px;
    width: 100px;
    height: 25px;
    padding-left: 27px;
}

.sheet-nav .left { border-right-color: #b8b8b8; }
.sheet-nav .right { border-left-color: #b8b8b8; }

.sheet-tab {
    height: 20px;
    margin-top: 3px;
    padding: 0 11px 2px;
    border-right: 1px solid #ababab;
    font-size: 13px;
    color: #444;
}

.sheet-tab.active {
    height: 25px;
    margin-top: -1px;
    padding: 0 11px;
    border: 1px solid #ababab;
    border-top: none;
    border-bottom: 2px solid #217346;
    background-color: #fff;
    color: #217346;
}

.add {
    height: 27px;
    margin-left: 33px;
}

.hscroll {
    flex: 1;
    display: flex;
    align-items: center;
    height: 15px;
    margin-top: 6px;
    max-width: 682px;
    margin-left: auto;
    margin-right: 19px;
}

.hscroll .dots {
    margin-right: 15px;
}

.htrack {
    flex: 1;
    height: 15px;
    background-color: #dadada;
}

.hthumb {
    width: 17px;
    height: 15px;
    margin-left: -1px;
    border: 1px solid #ababab;
    background-color: #fff;
}

.status {
    display: flex;
    align-items: flex-start;
    height: 15px;
    overflow: hidden;
    padding: 0 19px 0 7px;
    border-top: 1px solid #c6c6c6;
    background-color: #f3f3f3;
}

.status > span {
    line-height: 20px;
}

.views {
    display: flex;
    margin-left: auto;
}

.views button {
    width: 38px;
    height: 22px;
    display: flex;
    align-items: center;
    justify-content: center;
}

.views .on {
    background-color: #c6c6c6;
}

.zoom-out, .zoom-in {
    flex: none;
    width: 7px;
    height: 20px;
    background: linear-gradient(#666, #666) no-repeat center / 7px 2px;
}

.zoom-in {
    background: linear-gradient(#666, #666) no-repeat center / 7px 2px, linear-gradient(#666, #666) no-repeat center / 2px 7px;
}

.zoom-out {
    margin-left: 5px;
}

.zoom {
    appearance: none;
    width: 100px;
    height: 20px;
    margin: 0 4px;
    background: linear-gradient(#aaa, #aaa) no-repeat center / 100% 1px;
}

.zoom::-webkit-slider-thumb {
    appearance: none;
    width: 5px;
    height: 11px;
    background-color: #666;
}

.percent-value {
    margin-left: 11px;
}

/* highlight box round the sheet tabs */
.marker {
    position: absolute;
    left: 60px;
    bottom: 1px;
    width: 270px;
    height: 71px;
    border: 1px solid #ec1c24;
    pointer-events: none;
}
```
